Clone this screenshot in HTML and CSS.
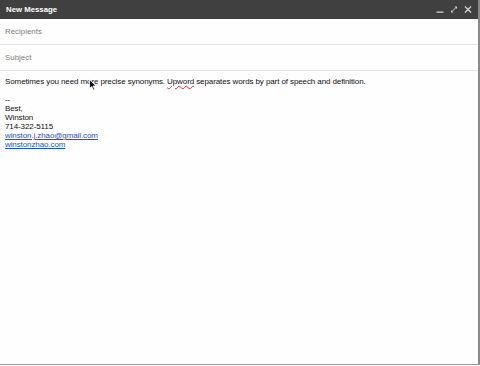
FILE: index.html
```html
<!DOCTYPE html>
<html lang="en">
<head>
  <meta charset="UTF-8">
  <title>New Message</title>
  <link rel="stylesheet" href="styles.css">
</head>
<body>
  <div class="compose">
    <header class="bar">
      <span class="bar-title">New Message</span>
      <div class="bar-icons">
        <svg width="8" height="9" viewBox="0 0 8 9"><rect x="0.5" y="6.5" width="7" height="1.3" fill="#d0d0d0"/></svg>
        <svg width="8" height="9" viewBox="0 0 8 9"><path d="M4.5 1.5h2.5v2.5zM3.5 7.5H1V5z" fill="#d0d0d0"/><path d="M6.2 2.3L1.8 6.7" stroke="#d0d0d0" stroke-width="1"/></svg>
        <svg width="8" height="9" viewBox="0 0 8 9"><path d="M1 1.5l6 6M7 1.5l-6 6" stroke="#d0d0d0" stroke-width="1.4"/></svg>
      </div>
    </header>
    <div class="field">Recipients</div>
    <div class="field">Subject</div>
    <div class="body">
      <p class="line">Sometimes you need more precise synonyms. <span class="typo">Upword</span> separates words by part of speech and definition.</p>
      <div class="sig">
        <div>--</div>
        <div>Best,</div>
        <div>Winston</div>
        <div>714-322-5115</div>
        <div><a href="#">winston.j.zhao@gmail.com</a></div>
        <div><a href="#">winstonzhao.com</a></div>
      </div>
      <svg class="cursor" width="8" height="12" viewBox="0 0 8 12"><path d="M0.5 0.5v9l2.2-2 1.6 3.6 1.4-.6-1.6-3.5h3z" fill="#111" stroke="#fff" stroke-width="0.8"/></svg>
    </div>
  </div>
</body>
</html>
```

FILE: styles.css
```css
html, body {
  margin: 0;
  padding: 0;
  background-color: #fff;
}

body {
  font-family: "Liberation Sans", Arial, sans-serif;
  width: 480px;
  height: 366px;
  overflow: hidden;
}

.compose {
  height: 365px;
  border-right: 2px solid #8a8a8a;
  border-bottom: 1px solid #9a9a9a;
  box-sizing: border-box;
  display: flex;
  flex-direction: column;
  background-color: #fefefe;
}

.bar {
  height: 19px;
  background-color: #404040;
  display: flex;
  align-items: center;
  justify-content: space-between;
  padding: 0 6px 0 6px;
  flex-shrink: 0;
}

.bar-title {
  color: #fff;
  font-size: 7.8px;
  font-weight: bold;
}

.bar-icons {
  display: flex;
  gap: 6px;
  align-items: center;
}

.field {
  height: 25px;
  line-height: 26px;
  padding-left: 5px;
  font-size: 7.9px;
  color: #7e7e7e;
  border-bottom: 1px solid #e4e4e4;
  flex-shrink: 0;
}

.body {
  position: relative;
  padding: 6px 5px 0;
  font-size: 8px;
  letter-spacing: -0.1px;
  color: #111;
  line-height: 9px;
}

.line {
  margin: 0 0 9px;
}

.typo {
  text-decoration: underline wavy #d33;
  text-decoration-thickness: 0.5px;
}

.sig a {
  color: #1a55cc;
  text-decoration: underline;
}

.cursor {
  position: absolute;
  left: 89px;
  top: 8px;
}
```
